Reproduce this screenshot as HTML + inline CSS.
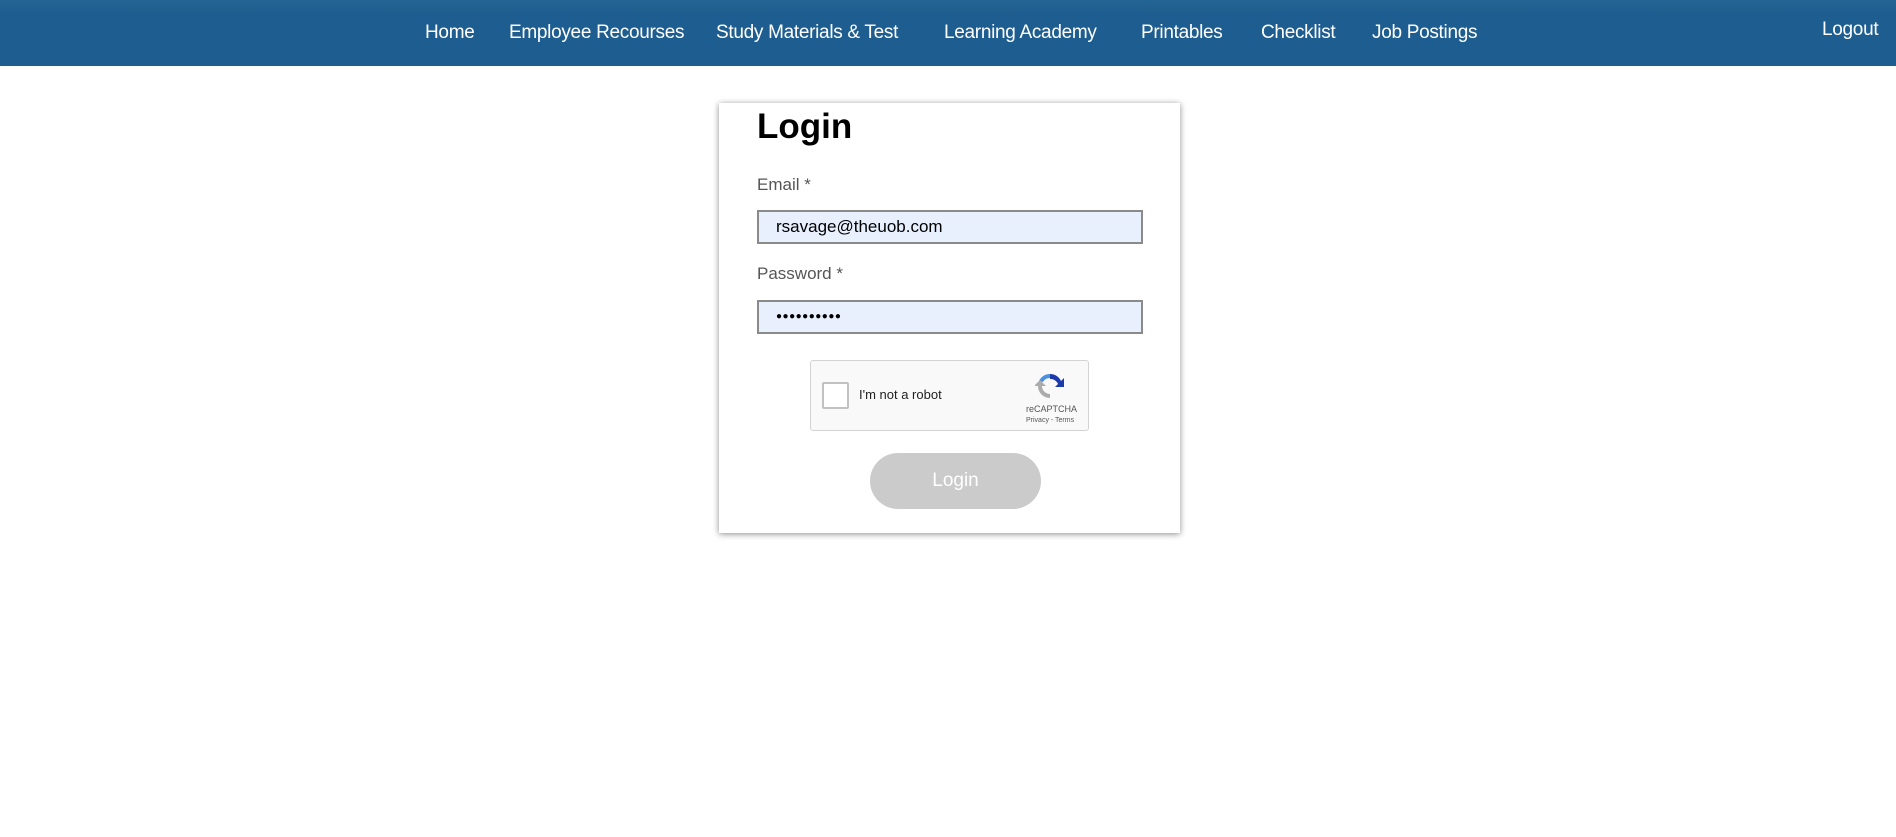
<!DOCTYPE html>
<html><head><style>
body{margin:0;width:1896px;height:837px;background:#fff;font-family:"Liberation Sans",sans-serif;position:relative;overflow:hidden}
.nav{position:absolute;left:0;top:0;width:1896px;height:66px;background:linear-gradient(#256595,#1e5d8f 20%,#1e5d8f)}
.nav a{position:absolute;top:22px;color:#fff;font-size:19px;text-decoration:none;white-space:nowrap;letter-spacing:-0.3px}
.card{position:absolute;left:719px;top:103px;width:461px;height:430px;background:#fff;box-shadow:0 1px 6px rgba(0,0,0,.45)}
.abs{position:absolute}
.lbl{position:absolute;left:38px;font-size:17px;color:#555}
.inp{position:absolute;left:38px;height:30px;background:#e8f0fe;border:2px solid #8a8a8a;font-size:17px;color:#000;line-height:30px;padding-left:17px;width:365px}
</style></head><body>
<div class="nav">
<a style="left:425px">Home</a>
<a style="left:509px">Employee Recourses</a>
<a style="left:716px">Study Materials &amp; Test</a>
<a style="left:944px">Learning Academy</a>
<a style="left:1141px">Printables</a>
<a style="left:1261px">Checklist</a>
<a style="left:1372px">Job Postings</a>
<a style="left:1822px;top:19px">Logout</a>
</div>
<div class="card">
<div class="abs" style="left:38px;top:4px;font-size:35px;font-weight:bold;color:#000">Login</div>
<div class="lbl" style="top:72px">Email *</div>
<div class="inp" style="top:107px">rsavage@theuob.com</div>
<div class="lbl" style="top:161px">Password *</div>
<div class="inp" style="top:197px;font-size:10px;letter-spacing:0.5px">●●●●●●●●●●</div>
<div class="abs" style="left:91px;top:257px;width:277px;height:69px;background:#f9f9f9;border:1px solid #d3d3d3;border-radius:3px">
 <div class="abs" style="left:11px;top:21px;width:23px;height:23px;border:2px solid #c1c1c1;border-radius:2px;background:#fff"></div>
 <div class="abs" style="left:48px;top:26px;font-size:13px;color:#222">I'm not a robot</div>
 <svg class="abs" style="left:224px;top:10px" width="30" height="30" viewBox="0 0 30 30"><path d="M15 3a12 12 0 0 1 11 7l3-3v9h-9l3-3a8 8 0 0 0-8-5z" fill="#1c3aa9"/><path d="M15 3a12 12 0 0 0-11 7l4 1a8 8 0 0 1 7-4z" fill="#4a90e2"/><path d="M3 15a12 12 0 0 0 12 12v-4a8 8 0 0 1-8-8h4l-6-6-6 6z" fill="#ababab"/></svg>
 <div class="abs" style="left:215px;top:43px;font-size:9px;color:#555">reCAPTCHA</div>
 <div class="abs" style="left:215px;top:56px;font-size:7px;color:#555">Privacy - Terms</div>
</div>
<div class="abs" style="left:151px;top:350px;width:171px;height:56px;border-radius:28px;background:#cbcbcb;color:#fff;font-size:19px;text-align:center;line-height:56px">Login</div>
</div>
</body></html>
